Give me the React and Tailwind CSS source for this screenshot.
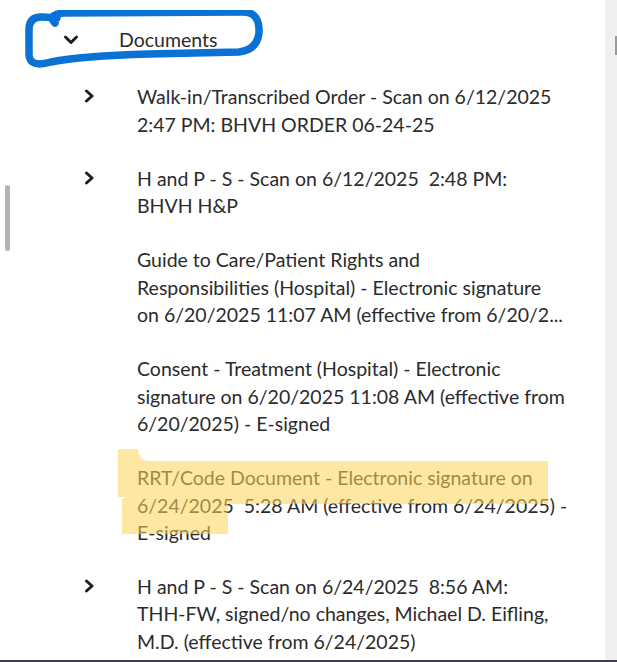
const docs = [
  { lines: ["Walk-in/Transcribed Order - Scan on 6/12/2025", "2:47 PM: BHVH ORDER 06-24-25"], expandable: true },
  { lines: ["H and P - S - Scan on 6/12/2025  2:48 PM:", "BHVH H&P"], expandable: true },
  {
    lines: [
      "Guide to Care/Patient Rights and",
      "Responsibilities (Hospital) - Electronic signature",
      "on 6/20/2025 11:07 AM (effective from 6/20/2...",
    ],
  },
  {
    lines: [
      "Consent - Treatment (Hospital) - Electronic",
      "signature on 6/20/2025 11:08 AM (effective from",
      "6/20/2025) - E-signed",
    ],
  },
  {
    lines: ["RRT/Code Document - Electronic signature on", "6/24/2025  5:28 AM (effective from 6/24/2025) -", "E-signed"],
    marked: true,
  },
  {
    lines: [
      "H and P - S - Scan on 6/24/2025  8:56 AM:",
      "THH-FW, signed/no changes, Michael D. Eifling,",
      "M.D. (effective from 6/24/2025)",
    ],
    expandable: true,
  },
];

// marker strokes drawn over a row of text
const Highlight = () => (
  <svg className="pointer-events-none absolute left-[-19px] top-[-16px]" width="440" height="100" viewBox="0 0 440 100">
    <path
      d="M0 1 L20 1 Q21 12 30 13 L430 13 L430 56 L110 56 L110 86 L4 86 L4 54 Q3 49 10 49 L0 49 Z"
      fill="#fbd45a"
      fillOpacity="0.56"
    />
  </svg>
);

const Chevron = () => (
  <svg width="11" height="14" viewBox="0 0 11 14">
    <path d="M2.5 2 L8 7 L2.5 12" fill="none" stroke="#1f1f1f" strokeWidth="3" strokeLinecap="round" strokeLinejoin="round" />
  </svg>
);

const DocRow = ({ doc }) => (
  <div className="flex">
    <div className="w-[53px] shrink-0 pt-[6px]">{doc.expandable && <Chevron />}</div>
    <div className="relative">
      {doc.lines.map((line, i) => (
        <p key={i} className="whitespace-pre">
          {line}
        </p>
      ))}
      {doc.marked && <Highlight />}
    </div>
  </div>
);

export default function App() {
  return (
    <div
      className="relative flex h-[662px] w-[617px] overflow-hidden border-b-2 border-[#3b4050] bg-white text-[19.5px] leading-[27.3px] text-[#2b2b2b]"
      style={{ fontFamily: "Lato, 'Noto Sans', sans-serif" }}
    >
      {/* left scroll thumb */}
      <div className="w-[20px] shrink-0 pt-[185px] pl-[5px]">
        <div className="h-[66px] w-[5px] rounded-full bg-[#b3b3b3]" />
      </div>

      <div className="flex-1 pt-[26px]">
        <div className="relative flex items-center pl-[43px]">
          <svg width="16" height="12" viewBox="0 0 16 12">
            <path d="M2.5 3 L8 8.5 L13.5 3" fill="none" stroke="#1f1f1f" strokeWidth="3" strokeLinecap="round" strokeLinejoin="round" />
          </svg>
          <span className="ml-[40px]">Documents</span>
          {/* pen loop around the heading */}
          <svg className="pointer-events-none absolute left-[-1px] top-[-16px]" width="250" height="70" viewBox="0 0 250 70">
            <path
              d="M36 13 Q28 5 44 3 L224 2 Q241 2 240 23 Q238 40 220 42 L130 44 Q62 46 32 52 Q11 58 10 45 L10 18 Q11 6 24 7 L38 8"
              fill="none"
              stroke="#0a72d4"
              strokeWidth="7.5"
              strokeLinecap="round"
              strokeLinejoin="round"
            />
          </svg>
        </div>

        <div className="mt-[30px] flex flex-col gap-[27px] pl-[64px]">
          {docs.map((doc, i) => (
            <DocRow key={i} doc={doc} />
          ))}
        </div>
      </div>

      {/* right scrollbar */}
      <div className="w-[12px] shrink-0 bg-[#f0f0f0] pt-[36px]">
        <div className="ml-auto h-[19px] w-[2px] bg-[#9a9a9a]" />
      </div>
    </div>
  );
}
